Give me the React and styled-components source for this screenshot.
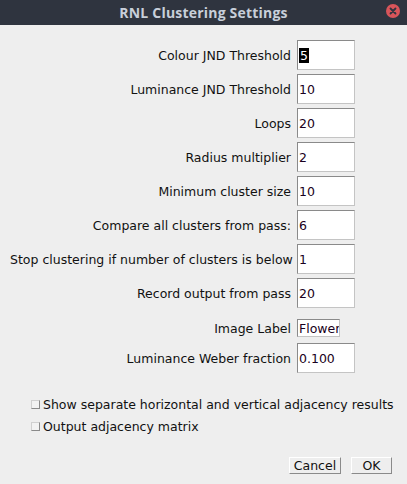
import React from 'react';
import styled, { createGlobalStyle } from 'styled-components';

const GlobalStyle = createGlobalStyle`
  html, body {
    margin: 0;
    padding: 0;
    background: #eeeeee;
  }
  * { box-sizing: border-box; }
`;

const Window = styled.div`
  width: 407px;
  height: 484px;
  background: #eeeeee;
  display: flex;
  flex-direction: column;
  font-family: "DejaVu Sans", "Liberation Sans", sans-serif;
  font-size: 12.5px;
  color: #111;
  overflow: hidden;
`;

const TitleBar = styled.div`
  height: 25px;
  flex: none;
  background: #2f343f;
  display: flex;
  align-items: center;
  justify-content: center;
  position: relative;
`;

const Title = styled.div`
  color: #c8cfda;
  font-family: "Open Sans", "DejaVu Sans", sans-serif;
  font-weight: 700;
  font-size: 14px;
  letter-spacing: 0.2px;
  margin-left: 0px;
`;

const CloseButton = styled.div`
  position: absolute;
  right: 7px;
  top: 4px;
  width: 14px;
  height: 14px;
  border-radius: 50%;
  background: #d9555a;
  display: flex;
  align-items: center;
  justify-content: center;
`;

const Body = styled.div`
  flex: 1;
  display: flex;
  flex-direction: column;
  padding: 15px 15px 0 10px;
`;

const Form = styled.div`
  display: flex;
  flex-direction: column;
  gap: 4px;
`;

const Row = styled.div`
  display: grid;
  grid-template-columns: 281px 58px;
  column-gap: 6px;
  height: ${p => (p.$short ? 27 : 30)}px;
  align-items: center;
`;

const Label = styled.div`
  text-align: right;
  white-space: nowrap;
  margin-top: ${p => (p.$short ? 5 : 0)}px;
`;

const Field = styled.div`
  width: ${p => (p.$short ? 43 : 58)}px;
  height: ${p => (p.$short ? 18 : 30)}px;
  align-self: ${p => (p.$short ? 'end' : 'center')};
  margin-bottom: ${p => (p.$short ? 2 : 0)}px;
  background: #ffffff;
  border-top: 1px solid #8a8a8a;
  border-left: 1px solid #8a8a8a;
  border-right: 1px solid #c4c4c4;
  border-bottom: 1px solid #c4c4c4;
  display: flex;
  align-items: center;
  padding-left: 1px;
  color: #1a0020;
  white-space: nowrap;
  overflow: hidden;
`;

const Selected = styled.span`
  background: #000;
  color: #fff;
  padding: 0 1px;
  line-height: 15px;
`;

const Checks = styled.div`
  display: flex;
  flex-direction: column;
  gap: 4px;
  margin-top: 22px;
  padding-left: 21px;
`;

const CheckRow = styled.div`
  height: 18px;
  display: flex;
  align-items: center;
  gap: 3px;
  white-space: nowrap;
`;

const Box = styled.span`
  width: 9px;
  height: 9px;
  background: #f2f2f2;
  border-top: 1px solid #d0d0d0;
  border-left: 1px solid #d0d0d0;
  border-right: 1px solid #8a8a8a;
  border-bottom: 1px solid #8a8a8a;
  flex: none;
`;

const Buttons = styled.div`
  display: flex;
  justify-content: flex-end;
  gap: 10px;
  margin-top: 22px;
`;

const Button = styled.div`
  height: 17px;
  width: ${p => p.$w}px;
  background: #eeeeee;
  border-top: 1px solid #ffffff;
  border-left: 1px solid #ffffff;
  border-right: 1px solid #8a8a8a;
  border-bottom: 1px solid #8a8a8a;
  display: flex;
  align-items: center;
  justify-content: center;
  color: #111;
`;

const fields = [
  ['Colour JND Threshold', '5', true],
  ['Luminance JND Threshold', '10'],
  ['Loops', '20'],
  ['Radius multiplier', '2'],
  ['Minimum cluster size', '10'],
  ['Compare all clusters from pass:', '6'],
  ['Stop clustering if number of clusters is below', '1'],
  ['Record output from pass', '20'],
];

export default function App() {
  return (
    <>
      <GlobalStyle />
      <Window>
        <TitleBar>
          <Title>RNL Clustering Settings</Title>
          <CloseButton>
            <svg width="8" height="8" viewBox="0 0 8 8">
              <path d="M1.5 1.5 L6.5 6.5 M6.5 1.5 L1.5 6.5" stroke="#2f343f" strokeWidth="1.8" strokeLinecap="round" />
            </svg>
          </CloseButton>
        </TitleBar>
        <Body>
          <Form>
            {fields.map(([label, value, sel]) => (
              <Row key={label}>
                <Label>{label}</Label>
                <Field>{sel ? <Selected>{value}</Selected> : value}</Field>
              </Row>
            ))}
            <Row $short>
              <Label $short>Image Label</Label>
              <Field $short>Flower</Field>
            </Row>
            <Row>
              <Label>Luminance Weber fraction</Label>
              <Field>0.100</Field>
            </Row>
          </Form>
          <Checks>
            <CheckRow><Box />Show separate horizontal and vertical adjacency results</CheckRow>
            <CheckRow><Box />Output adjacency matrix</CheckRow>
          </Checks>
          <Buttons>
            <Button $w={52}>Cancel</Button>
            <Button $w={41}>OK</Button>
          </Buttons>
        </Body>
      </Window>
    </>
  );
}
